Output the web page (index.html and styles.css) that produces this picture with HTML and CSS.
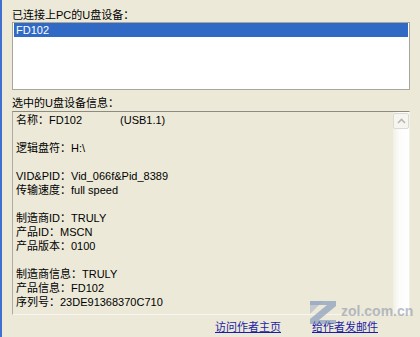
FILE: index.html
```html
<!DOCTYPE html>
<html>
<head>
<meta charset="utf-8">
<link rel="stylesheet" href="styles.css">
</head>
<body>
<div class="window">
  <div class="label label-top">已连接上PC的U盘设备：</div>
  <div class="listbox">
    <div class="row selected">FD102</div>
  </div>
  <div class="label label-info">选中的U盘设备信息：</div>
  <div class="infobox">
    <div class="info">
      <div class="line">名称：FD102<span class="usb">(USB1.1)</span></div>
      <div class="line blank"></div>
      <div class="line">逻辑盘符：H:\</div>
      <div class="line blank"></div>
      <div class="line">VID&amp;PID：Vid_066f&amp;Pid_8389</div>
      <div class="line">传输速度：full speed</div>
      <div class="line blank"></div>
      <div class="line">制造商ID：TRULY</div>
      <div class="line">产品ID：MSCN</div>
      <div class="line">产品版本：0100</div>
      <div class="line blank"></div>
      <div class="line">制造商信息：TRULY</div>
      <div class="line">产品信息：FD102</div>
      <div class="line">序列号：23DE91368370C710</div>
    </div>
    <div class="scrollbar">
      <div class="sb-btn">
        <svg width="9" height="6" viewBox="0 0 9 6"><path d="M1 5 L4.5 1.5 L8 5" fill="none" stroke="#b9b9b2" stroke-width="1.6"/></svg>
      </div>
      <div class="sb-track"></div>
    </div>
  </div>
  <div class="links">
    <a class="link" href="#">访问作者主页</a>
    <a class="link" href="#">给作者发邮件</a>
  </div>
</div>
<div class="watermark">
  <svg class="wm-logo" width="30" height="26" viewBox="0 0 30 26">
    <path d="M2 2 L28 2 L28 7 L11 21 L28 21 L28 25 L2 25 L2 20 L19 6 L2 6 Z" fill="#6e86b4" opacity="0.55"/>
    <path d="M2 2 L15 2 L2 15 Z" fill="#9aa9c6" opacity="0.5"/>
  </svg>
  <span class="wm-text">zol.com.cn</span>
</div>
</body>
</html>
```

FILE: styles.css
```css
html, body {
  margin: 0;
  padding: 0;
}
body {
  width: 420px;
  height: 337px;
  overflow: hidden;
  background: #ECE9D8;
  font-family: "Liberation Sans", "Noto Sans CJK SC", sans-serif;
  font-size: 11px;
  color: #000;
  position: relative;
}
.window {
  border-left: 2px solid #3f6fcf;
  height: 337px;
  box-sizing: border-box;
  padding: 8px 10px 0 10px;
  display: flex;
  flex-direction: column;
}
.label {
  line-height: 14px;
  height: 14px;
  white-space: nowrap;
}
.listbox {
  box-sizing: border-box;
  height: 68px;
  background: #fff;
  border: 1px solid #a9a79b;
  padding: 0 1px;
}
.row {
  height: 14px;
  line-height: 14px;
  padding-left: 2px;
}
.row.selected {
  background: #316AC5;
  color: #fff;
}
.label-info {
  margin-top: 6px;
}
.infobox {
  margin-top: 1px;
  box-sizing: border-box;
  height: 204px;
  border-top: 1px solid #8c8b80;
  border-left: 1px solid #aeac9f;
  border-bottom: 1px solid #f7f6f0;
  border-right: 1px solid #f2f1ea;
  background: #ECE9D8;
  display: flex;
}
.info {
  flex: 1;
  padding: 1px 0 0 3px;
}
.line {
  height: 14px;
  line-height: 14px;
  white-space: nowrap;
}
.usb {
  margin-left: 38px;
}
.scrollbar {
  width: 16px;
  display: flex;
  flex-direction: column;
  background: linear-gradient(to right, #f1efe6, #fcfcfa 40%, #ffffff);
}
.sb-btn {
  box-sizing: border-box;
  height: 16px;
  margin: 1px 0 0 0;
  border: 1px solid #dcdbd3;
  border-radius: 2px;
  background: #f6f5f0;
  display: flex;
  align-items: center;
  justify-content: center;
}
.sb-track {
  flex: 1;
}
.links {
  margin-top: 5px;
  display: flex;
  gap: 31px;
  padding-left: 203px;
  line-height: 14px;
}
.link {
  color: #1c1ca6;
  text-decoration: underline;
  white-space: nowrap;
}
.watermark {
  position: absolute;
  left: 308px;
  top: 299px;
  display: flex;
  align-items: flex-start;
  gap: 3px;
  pointer-events: none;
}
.wm-logo {
  display: block;
}
.wm-text {
  margin-top: 4px;
  font-family: "Liberation Sans", sans-serif;
  font-weight: bold;
  font-size: 14px;
  line-height: 16px;
  color: #8e96aa;
  opacity: 0.6;
}
```
